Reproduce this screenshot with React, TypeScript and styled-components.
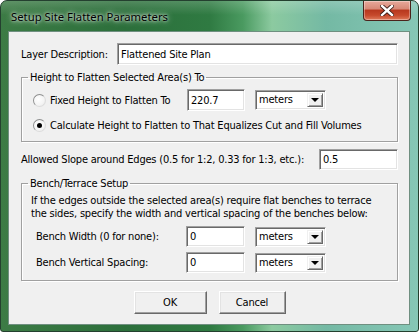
import React from 'react'
import styled, { createGlobalStyle } from 'styled-components'

const GlobalStyle = createGlobalStyle`
  body {
    margin: 0;
    background: #ffffff;
  }
`

const dialogFont = `"DejaVu Sans Condensed", "DejaVu Sans", sans-serif`

const Window = styled.div`
  width: 419px;
  height: 332px;
  box-sizing: border-box;
  display: flex;
  flex-direction: column;
  padding: 0 8px 6px 7px;
  border: 1px solid #24402f;
  border-radius: 7px 7px 3px 3px;
  background:
    linear-gradient(180deg, rgba(255, 255, 255, 0.18) 0px, rgba(255, 255, 255, 0) 14px),
    linear-gradient(90deg, #3c7b45 0%, #2c6f3b 30%, #2f7a42 50%, #4a9a60 58%, #8ccaa0 65%, #74b9a4 78%, #86c7b6 100%);
`

const TitleBar = styled.div`
  height: 30px;
  display: flex;
  align-items: flex-start;
  justify-content: space-between;
`

const Title = styled.div`
  margin: 8px 0 0 3px;
  font: 11.3px "Noto Sans", sans-serif;
  color: #000;
  text-shadow: 0 0 6px rgba(255, 255, 255, 0.9), 0 0 3px rgba(255, 255, 255, 0.9);
`

const CloseButton = styled.div`
  width: 48px;
  height: 20px;
  margin-right: -1px;
  box-sizing: border-box;
  display: flex;
  align-items: center;
  justify-content: center;
  border: 1px solid #4b231b;
  border-top: none;
  border-radius: 0 0 4px 4px;
  background: linear-gradient(180deg, #e7a99b 0%, #d88a78 40%, #b8391f 50%, #c6492c 75%, #df7b5c 100%);
  box-shadow: inset 0 0 0 1px rgba(255, 255, 255, 0.35);
`

const Client = styled.div`
  flex: 1;
  display: flex;
  flex-direction: column;
  padding: 11px 11px 0 12px;
  background: #f0f0f0;
  border: 1px solid #6f8f80;
  font-family: ${dialogFont};
  font-size: 11px;
  letter-spacing: -0.2px;
  color: #000;
`

const Row = styled.div<{ $h?: number }>`
  display: flex;
  align-items: center;
  height: ${p => p.$h ?? 21}px;
`

const Label = styled.span<{ $w?: number }>`
  flex: none;
  width: ${p => (p.$w ? `${p.$w}px` : 'auto')};
  white-space: nowrap;
`

const TextBox = styled.input<{ $w: number; $h?: number }>`
  width: ${p => p.$w}px;
  height: ${p => p.$h ?? 21}px;
  box-sizing: border-box;
  margin: 0;
  padding: 0 3px;
  font-family: ${dialogFont};
  font-size: 11px;
  letter-spacing: -0.2px;
  color: #000;
  background: #fff;
  border: 1px solid;
  border-color: #a0a0a0 #ffffff #ffffff #a0a0a0;
  box-shadow: inset 1px 1px 0 #696969, inset -1px -1px 0 #e3e3e3;
  outline: none;
`

const ComboBox = styled.div`
  width: 71px;
  height: 20px;
  margin-left: 10px;
  box-sizing: border-box;
  display: flex;
  align-items: stretch;
  background: #fff;
  border: 1px solid;
  border-color: #a0a0a0 #ffffff #ffffff #a0a0a0;
  box-shadow: inset 1px 1px 0 #696969, inset -1px -1px 0 #e3e3e3;
  padding: 2px;
`

const ComboText = styled.span`
  flex: 1;
  padding-left: 1px;
  line-height: 14px;
`

const DropButton = styled.span`
  width: 16px;
  box-sizing: border-box;
  display: flex;
  align-items: center;
  justify-content: center;
  background: #f0f0f0;
  border: 1px solid;
  border-color: #f0f0f0 #696969 #696969 #f0f0f0;
  box-shadow: inset 1px 1px 0 #fff, inset -1px -1px 0 #a0a0a0;

  &::after {
    content: '';
    border-left: 4px solid transparent;
    border-right: 4px solid transparent;
    border-top: 4px solid #000;
  }
`

const Group = styled.fieldset<{ $pad: string }>`
  margin: 0;
  min-width: 0;
  padding: ${p => p.$pad};
  border: 1px solid #a0a0a0;
  box-shadow: 1px 1px 0 #fff, inset 1px 1px 0 #fff;
`

const Legend = styled.legend`
  margin-left: 6px;
  padding: 0 2px;
  line-height: 13px;
`

const GroupBody = styled.div<{ $indent: number }>`
  display: flex;
  flex-direction: column;
  padding-left: ${p => p.$indent}px;
`

const RadioLabel = styled.label<{ $w?: number }>`
  flex: none;
  width: ${p => (p.$w ? `${p.$w}px` : 'auto')};
  display: flex;
  align-items: center;
  gap: 4px;
  white-space: nowrap;
`

const RadioDot = styled.span<{ $checked?: boolean }>`
  width: 13px;
  height: 13px;
  box-sizing: border-box;
  border-radius: 50%;
  border: 1px solid;
  border-color: #8e8f8f #dcdcdc #dcdcdc #8e8f8f;
  background: radial-gradient(circle at 40% 40%, #ffffff 0%, #f4f4f4 60%, #e0e0e0 100%);
  display: flex;
  align-items: center;
  justify-content: center;

  &::after {
    content: '';
    display: ${p => (p.$checked ? 'block' : 'none')};
    width: 5px;
    height: 5px;
    border-radius: 50%;
    background: #000;
  }
`

const Note = styled.div`
  line-height: 13px;
`

const ButtonBar = styled.div`
  display: flex;
  justify-content: center;
  gap: 12px;
  margin-top: 10px;
`

const Button = styled.button<{ $w: number }>`
  width: ${p => p.$w}px;
  height: 23px;
  margin: 0;
  padding: 0;
  font-family: ${dialogFont};
  font-size: 11px;
  letter-spacing: -0.2px;
  color: #000;
  background: #f0f0f0;
  border: 1px solid;
  border-color: #ffffff #696969 #696969 #ffffff;
  box-shadow: inset -1px -1px 0 #a0a0a0, inset 1px 1px 0 #e3e3e3;
`

const Units = () => (
  <ComboBox>
    <ComboText>meters</ComboText>
    <DropButton />
  </ComboBox>
)

const CloseGlyph = () => (
  <svg width="14" height="11" viewBox="0 0 14 11">
    <path d="M2 1 L12 10 M12 1 L2 10" fill="none" stroke="#3a1a14" strokeWidth="4.2" strokeLinecap="square" />
    <path d="M2 1 L12 10 M12 1 L2 10" fill="none" stroke="#ffffff" strokeWidth="2.4" strokeLinecap="square" />
  </svg>
)

const App = () => {
  return (
    <>
      <GlobalStyle />
      <Window>
        <TitleBar>
          <Title>Setup Site Flatten Parameters</Title>
          <CloseButton>
            <CloseGlyph />
          </CloseButton>
        </TitleBar>
        <Client>
          <Row $h={22}>
            <Label $w={96}>Layer Description:</Label>
            <TextBox $w={281} $h={22} defaultValue="Flattened Site Plan" />
          </Row>

          <Group $pad="5px 0 8px 0" style={{ marginTop: 6 }}>
            <Legend>Height to Flatten Selected Area(s) To</Legend>
            <GroupBody $indent={11}>
              <Row $h={22}>
                <RadioLabel $w={154}>
                  <RadioDot />
                  Fixed Height to Flatten To
                </RadioLabel>
                <TextBox $w={58} $h={22} defaultValue="220.7" />
                <Units />
              </Row>
              <Row $h={16} style={{ marginTop: 6 }}>
                <RadioLabel>
                  <RadioDot $checked />
                  Calculate Height to Flatten to That Equalizes Cut and Fill Volumes
                </RadioLabel>
              </Row>
            </GroupBody>
          </Group>

          <Row style={{ marginTop: 7 }}>
            <Label $w={298}>Allowed Slope around Edges (0.5 for 1:2, 0.33 for 1:3, etc.):</Label>
            <TextBox $w={79} defaultValue="0.5" />
          </Row>

          <Group $pad="4px 0 7px 0" style={{ marginTop: 7 }}>
            <Legend>Bench/Terrace Setup</Legend>
            <GroupBody $indent={9}>
              <Note>If the edges outside the selected area(s) require flat benches to terrace</Note>
              <Note>the sides, specify the width and vertical spacing of the benches below:</Note>
              <Row style={{ marginTop: 6, paddingLeft: 5 }}>
                <Label $w={150}>Bench Width (0 for none):</Label>
                <TextBox $w={59} defaultValue="0" />
                <Units />
              </Row>
              <Row style={{ marginTop: 5, paddingLeft: 5 }}>
                <Label $w={150}>Bench Vertical Spacing:</Label>
                <TextBox $w={59} defaultValue="0" />
                <Units />
              </Row>
            </GroupBody>
          </Group>

          <ButtonBar>
            <Button $w={73}>OK</Button>
            <Button $w={67}>Cancel</Button>
          </ButtonBar>
        </Client>
      </Window>
    </>
  )
}

export default App
